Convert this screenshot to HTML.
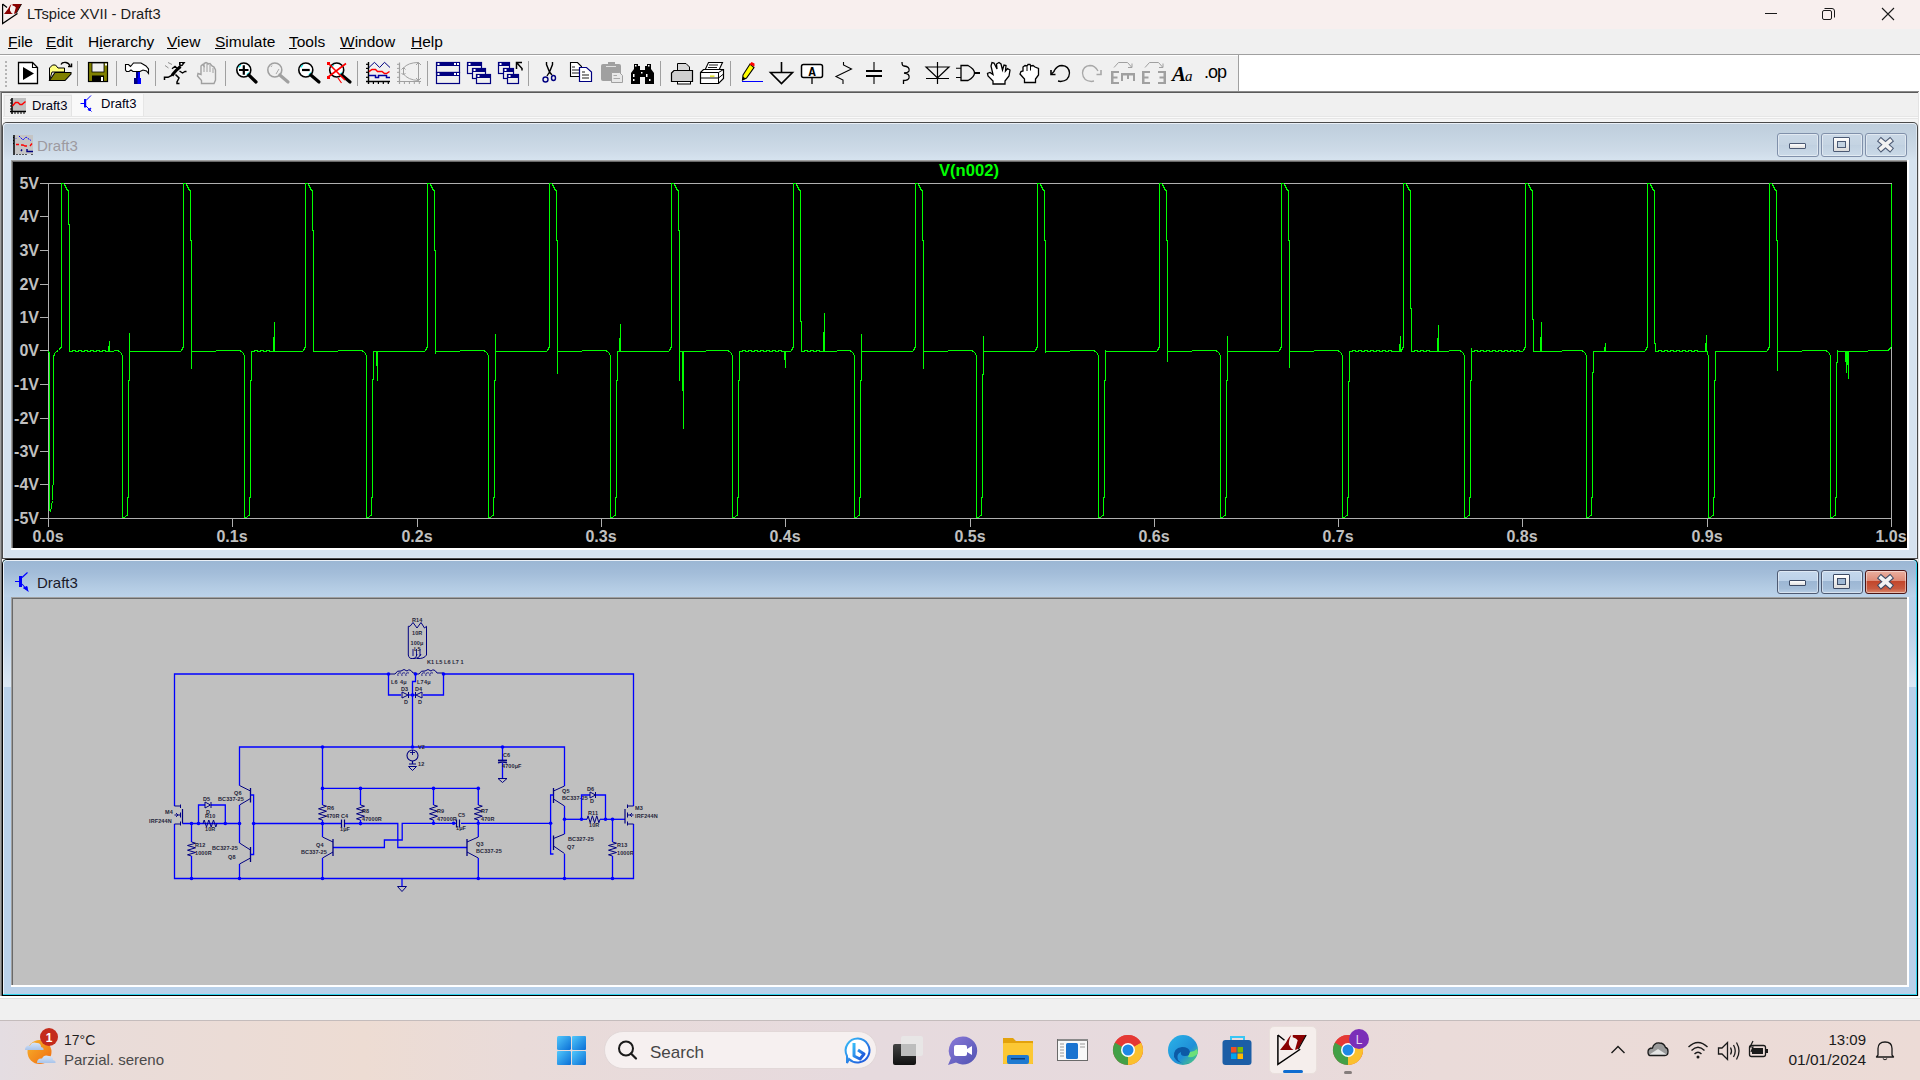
<!DOCTYPE html><html><head><meta charset="utf-8"><style>
*{box-sizing:border-box;}
html,body{margin:0;padding:0;}
body{width:1920px;height:1080px;position:relative;overflow:hidden;background:#f0f0f0;font-family:"Liberation Sans",sans-serif;}
.a{position:absolute;}
.t{position:absolute;white-space:nowrap;line-height:1;}
svg{position:absolute;overflow:visible;}
</style></head><body><div class="a" style="left:0px;top:0px;width:1920px;height:29px;background:#f8efee;"></div>
<div class="a" style="left:0px;top:29px;width:1920px;height:25px;background:#f0f0f0;"></div>
<div class="a" style="left:0px;top:54px;width:1920px;height:1px;background:#a0a0a0;"></div>
<div class="a" style="left:0px;top:55px;width:1920px;height:1px;background:#ffffff;"></div>
<div class="a" style="left:0px;top:56px;width:1238px;height:36px;background:#f0f0f0;"></div>
<div class="a" style="left:1238px;top:55px;width:1px;height:37px;background:#a0a0a0;"></div>
<div class="a" style="left:1239px;top:55px;width:681px;height:37px;background:#ffffff;"></div>
<div class="a" style="left:0px;top:91px;width:1919px;height:1px;background:#8a8a8a;"></div>
<div class="a" style="left:0px;top:92px;width:1919px;height:1px;background:#5a5a5a;"></div>
<div class="a" style="left:0px;top:92px;width:1px;height:904px;background:#a0a0a0;"></div>
<div class="a" style="left:1px;top:92px;width:1px;height:904px;background:#696969;"></div>
<div class="a" style="left:2px;top:93px;width:1px;height:903px;background:#ffffff;"></div>
<div class="a" style="left:1918px;top:92px;width:1px;height:904px;background:#e3e3e3;"></div>
<div class="a" style="left:1919px;top:92px;width:1px;height:904px;background:#ffffff;"></div>
<div class="a" style="left:3px;top:93px;width:1915px;height:25px;background:#f0f0f0;"></div>
<div class="a" style="left:3px;top:118px;width:1915px;height:4px;background:#f4f4f4;"></div>
<div class="a" style="left:0px;top:996px;width:1920px;height:24px;background:#f0f0f0;"></div>
<div class="a" style="left:0px;top:996px;width:1920px;height:2px;background:#ffffff;"></div>
<div class="a" style="left:0px;top:998px;width:1920px;height:1px;background:#e0e0e0;"></div>
<div class="a" style="left:4px;top:95px;width:68px;height:22px;background:#f0f0f0;border:1px solid #e3e3e3;"></div>
<div class="a" style="left:72px;top:94px;width:72px;height:24px;background:#f9f9f9;border-right:1px solid #e6e6e6;"></div>
<div class="a" style="left:3px;top:116px;width:1915px;height:1px;background:#e6e6e6;"></div>
<div class="a" style="left:3px;top:117px;width:1915px;height:1px;background:#fafafa;"></div>
<div class="a" style="left:3px;top:118px;width:1915px;height:1px;background:#e6e6e6;"></div>
<div class="t" style="left:32px;top:99px;font-size:13px;color:#000014;">Draft3</div>
<div class="t" style="left:101px;top:97px;font-size:13px;color:#000014;">Draft3</div>
<div class="a" style="left:2px;top:122px;width:1916px;height:437px;background:#4a4a4a;border-radius:5px 5px 0 0;"></div>
<div class="a" style="left:3px;top:123px;width:1914px;height:435px;background:#dde7f1;border-radius:4px 4px 0 0;"></div>
<div class="a" style="left:3px;top:123px;width:1913px;height:434px;background:#eaf0f7;border-radius:4px 4px 0 0;"></div>
<div class="a" style="left:4px;top:124px;width:1912px;height:433px;background:#d6e3ef;border-radius:3px 3px 0 0;"></div>
<div class="a" style="left:4px;top:124px;width:1912px;height:36px;background:linear-gradient(180deg,#bfcedc 0px,#c4d3e1 12px,#cddae7 26px,#d6e3ef 36px);border-radius:3px 3px 0 0;"></div>
<div class="a" style="left:11px;top:160px;width:1898px;height:390px;background:#ffffff;"></div>
<div class="a" style="left:11px;top:160px;width:1896px;height:388px;background:#a0a0a0;"></div>
<div class="a" style="left:12px;top:161px;width:1895px;height:387px;background:#696969;"></div>
<div class="a" style="left:2px;top:559px;width:1916px;height:437px;background:#000000;border-radius:5px 5px 0 0;"></div>
<div class="a" style="left:3px;top:560px;width:1914px;height:435px;background:#2fd3ee;border-radius:4px 4px 0 0;"></div>
<div class="a" style="left:3px;top:560px;width:1913px;height:434px;background:#eaf0f7;border-radius:4px 4px 0 0;"></div>
<div class="a" style="left:4px;top:561px;width:1912px;height:433px;background:#b9d1ea;border-radius:3px 3px 0 0;"></div>
<div class="a" style="left:4px;top:561px;width:1912px;height:36px;background:linear-gradient(180deg,#9bb7d4 0px,#a3bdd9 12px,#b3cbe3 26px,#bcd3ea 36px);border-radius:3px 3px 0 0;"></div>
<div class="a" style="left:4px;top:597px;width:7px;height:90px;background:linear-gradient(180deg,#b9d1ea 0%,#bdd3ea 38%,#dce8f4 100%);"></div>
<div class="a" style="left:1909px;top:597px;width:7px;height:90px;background:linear-gradient(180deg,#b9d1ea 0%,#bdd3ea 38%,#dce8f4 100%);"></div>
<div class="a" style="left:11px;top:597px;width:1898px;height:390px;background:#ffffff;"></div>
<div class="a" style="left:11px;top:597px;width:1896px;height:388px;background:#a0a0a0;"></div>
<div class="a" style="left:12px;top:598px;width:1895px;height:387px;background:#696969;"></div>
<div class="a" style="left:13px;top:162px;width:1894px;height:386px;background:#000000;"></div>
<div class="a" style="left:13px;top:599px;width:1894px;height:386px;background:#c0c0c0;"></div>
<svg class="a" style="left:0;top:0" width="1920" height="1080" shape-rendering="crispEdges"><path d="M48.5,183.5 H1891.5 V518.5 H48.5 Z" fill="none" stroke="#b0b0b0" stroke-width="1"/><path d="M40,183.5 H48" stroke="#b0b0b0" stroke-width="1"/><path d="M40,216.5 H48" stroke="#b0b0b0" stroke-width="1"/><path d="M40,250.5 H48" stroke="#b0b0b0" stroke-width="1"/><path d="M40,284.5 H48" stroke="#b0b0b0" stroke-width="1"/><path d="M40,317.5 H48" stroke="#b0b0b0" stroke-width="1"/><path d="M40,350.5 H48" stroke="#b0b0b0" stroke-width="1"/><path d="M40,384.5 H48" stroke="#b0b0b0" stroke-width="1"/><path d="M40,418.5 H48" stroke="#b0b0b0" stroke-width="1"/><path d="M40,451.5 H48" stroke="#b0b0b0" stroke-width="1"/><path d="M40,484.5 H48" stroke="#b0b0b0" stroke-width="1"/><path d="M40,518.5 H48" stroke="#b0b0b0" stroke-width="1"/><path d="M48.5,518 V527" stroke="#b0b0b0" stroke-width="1"/><path d="M232.5,518 V527" stroke="#b0b0b0" stroke-width="1"/><path d="M417.5,518 V527" stroke="#b0b0b0" stroke-width="1"/><path d="M601.5,518 V527" stroke="#b0b0b0" stroke-width="1"/><path d="M785.5,518 V527" stroke="#b0b0b0" stroke-width="1"/><path d="M970.5,518 V527" stroke="#b0b0b0" stroke-width="1"/><path d="M1154.5,518 V527" stroke="#b0b0b0" stroke-width="1"/><path d="M1338.5,518 V527" stroke="#b0b0b0" stroke-width="1"/><path d="M1522.5,518 V527" stroke="#b0b0b0" stroke-width="1"/><path d="M1707.5,518 V527" stroke="#b0b0b0" stroke-width="1"/><path d="M1891.5,518 V527" stroke="#b0b0b0" stroke-width="1"/><polyline points="48.5,351.5 49.5,353.5 49.5,510.5 50.5,511.5 51.5,506.5 52.5,500.5 53.5,470.5 53.5,357.5 54.5,353.5 56.5,351.5 58.5,350.5 59.5,349.5 60.5,347.5 60.5,348.5 61.5,346.5 61.5,183.5 63.5,183.5 64.5,184.5 65.5,186.5 66.5,188.5 67.5,190.5 68.5,190.5 68.5,224.5 69.5,224.5 69.5,351.5 69.5,351.5 70.5,351.5 72.5,351.5 72.5,350.5 75.5,350.5 75.5,351.5 78.5,351.5 78.5,350.5 81.5,350.5 81.5,351.5 84.5,351.5 84.5,350.5 87.5,350.5 87.5,351.5 90.5,351.5 90.5,350.5 93.5,350.5 93.5,351.5 96.5,351.5 96.5,350.5 99.5,350.5 99.5,351.5 102.5,351.5 102.5,350.5 105.5,350.5 105.5,351.5 108.5,351.5 109.5,341.5 109.5,351.5 110.5,351.5 117.5,350.5 119.5,351.5 121.5,353.5 122.5,356.5 122.5,517.5 124.5,517.5 125.5,516.5 126.5,515.5 127.5,515.5 127.5,497.5 128.5,497.5 128.5,380.5 129.5,380.5 129.5,332.5 129.5,351.5 130.5,351.5 180.5,351.5 181.5,350.5 182.5,348.5 183.5,346.5 183.5,183.5 185.5,183.5 186.5,184.5 187.5,186.5 188.5,188.5 189.5,190.5 190.5,190.5 190.5,240.5 191.5,240.5 191.5,368.5 191.5,351.5 192.5,351.5 239.5,350.5 241.5,351.5 243.5,353.5 244.5,356.5 244.5,517.5 246.5,517.5 247.5,516.5 248.5,515.5 249.5,515.5 249.5,497.5 250.5,497.5 250.5,380.5 251.5,380.5 251.5,351.5 251.5,351.5 252.5,351.5 254.5,351.5 254.5,350.5 257.5,350.5 257.5,351.5 260.5,351.5 260.5,350.5 263.5,350.5 263.5,351.5 266.5,351.5 266.5,350.5 269.5,350.5 269.5,351.5 273.5,351.5 274.5,322.5 274.5,351.5 275.5,351.5 302.5,351.5 303.5,350.5 304.5,348.5 305.5,346.5 305.5,183.5 307.5,183.5 308.5,184.5 309.5,186.5 310.5,188.5 311.5,190.5 312.5,190.5 312.5,230.5 313.5,230.5 313.5,351.5 313.5,351.5 314.5,351.5 361.5,350.5 363.5,351.5 365.5,353.5 366.5,356.5 366.5,517.5 368.5,517.5 369.5,516.5 370.5,515.5 371.5,515.5 371.5,497.5 372.5,497.5 372.5,379.5 373.5,379.5 373.5,351.5 373.5,351.5 374.5,351.5 376.5,351.5 377.5,380.5 377.5,351.5 378.5,351.5 424.5,351.5 425.5,350.5 426.5,348.5 427.5,346.5 427.5,183.5 429.5,183.5 430.5,184.5 431.5,186.5 432.5,188.5 433.5,190.5 434.5,190.5 434.5,250.5 435.5,250.5 435.5,353.5 435.5,351.5 436.5,351.5 483.5,350.5 485.5,351.5 487.5,353.5 488.5,356.5 488.5,517.5 490.5,517.5 491.5,516.5 492.5,515.5 493.5,515.5 493.5,497.5 494.5,497.5 494.5,380.5 495.5,380.5 495.5,333.5 495.5,351.5 496.5,351.5 546.5,351.5 547.5,350.5 548.5,348.5 549.5,346.5 549.5,183.5 551.5,183.5 552.5,184.5 553.5,186.5 554.5,188.5 555.5,190.5 556.5,190.5 556.5,240.5 557.5,240.5 557.5,373.5 557.5,351.5 558.5,351.5 605.5,350.5 607.5,351.5 609.5,353.5 610.5,356.5 610.5,517.5 612.5,517.5 613.5,516.5 614.5,515.5 615.5,515.5 615.5,497.5 616.5,497.5 616.5,380.5 617.5,380.5 617.5,351.5 617.5,351.5 618.5,351.5 619.5,351.5 620.5,324.5 620.5,351.5 621.5,351.5 668.5,351.5 669.5,350.5 670.5,348.5 671.5,346.5 671.5,183.5 673.5,183.5 674.5,184.5 675.5,186.5 676.5,188.5 677.5,190.5 678.5,190.5 678.5,230.5 679.5,230.5 679.5,380.5 679.5,351.5 680.5,351.5 682.5,351.5 683.5,428.5 683.5,351.5 684.5,351.5 727.5,350.5 729.5,351.5 731.5,353.5 732.5,356.5 732.5,517.5 734.5,517.5 735.5,516.5 736.5,515.5 737.5,515.5 737.5,497.5 738.5,497.5 738.5,380.5 739.5,380.5 739.5,351.5 739.5,351.5 740.5,351.5 742.5,351.5 742.5,350.5 745.5,350.5 745.5,351.5 748.5,351.5 748.5,350.5 751.5,350.5 751.5,351.5 754.5,351.5 754.5,350.5 757.5,350.5 757.5,351.5 760.5,351.5 760.5,350.5 763.5,350.5 763.5,351.5 766.5,351.5 766.5,350.5 769.5,350.5 769.5,351.5 772.5,351.5 772.5,350.5 775.5,350.5 775.5,351.5 778.5,351.5 778.5,350.5 781.5,350.5 781.5,351.5 784.5,351.5 785.5,367.5 785.5,351.5 786.5,351.5 790.5,351.5 791.5,350.5 792.5,348.5 793.5,346.5 793.5,183.5 795.5,183.5 796.5,184.5 797.5,186.5 798.5,188.5 799.5,190.5 800.5,190.5 800.5,321.5 801.5,321.5 801.5,351.5 801.5,351.5 802.5,351.5 804.5,351.5 804.5,350.5 807.5,350.5 807.5,351.5 810.5,351.5 810.5,350.5 813.5,350.5 813.5,351.5 816.5,351.5 816.5,350.5 819.5,350.5 819.5,351.5 823.5,351.5 824.5,313.5 824.5,351.5 825.5,351.5 849.5,350.5 851.5,351.5 853.5,353.5 854.5,356.5 854.5,517.5 856.5,517.5 857.5,516.5 858.5,515.5 859.5,515.5 859.5,497.5 860.5,497.5 860.5,380.5 861.5,380.5 861.5,333.5 861.5,351.5 862.5,351.5 912.5,351.5 913.5,350.5 914.5,348.5 915.5,346.5 915.5,183.5 917.5,183.5 918.5,184.5 919.5,186.5 920.5,188.5 921.5,190.5 922.5,190.5 922.5,240.5 923.5,240.5 923.5,368.5 923.5,351.5 924.5,351.5 971.5,350.5 973.5,351.5 975.5,353.5 976.5,356.5 976.5,517.5 978.5,517.5 979.5,516.5 980.5,515.5 981.5,515.5 981.5,497.5 982.5,497.5 982.5,374.5 983.5,374.5 983.5,335.5 983.5,351.5 984.5,351.5 1034.5,351.5 1035.5,350.5 1036.5,348.5 1037.5,346.5 1037.5,183.5 1039.5,183.5 1040.5,184.5 1041.5,186.5 1042.5,188.5 1043.5,190.5 1044.5,190.5 1044.5,240.5 1045.5,240.5 1045.5,352.5 1045.5,351.5 1046.5,351.5 1093.5,350.5 1095.5,351.5 1097.5,353.5 1098.5,356.5 1098.5,517.5 1100.5,517.5 1101.5,516.5 1102.5,515.5 1103.5,515.5 1103.5,497.5 1104.5,497.5 1104.5,380.5 1105.5,380.5 1105.5,349.5 1105.5,351.5 1106.5,351.5 1156.5,351.5 1157.5,350.5 1158.5,348.5 1159.5,346.5 1159.5,183.5 1161.5,183.5 1162.5,184.5 1163.5,186.5 1164.5,188.5 1165.5,190.5 1166.5,190.5 1166.5,240.5 1167.5,240.5 1167.5,361.5 1167.5,351.5 1168.5,351.5 1215.5,350.5 1217.5,351.5 1219.5,353.5 1220.5,356.5 1220.5,517.5 1222.5,517.5 1223.5,516.5 1224.5,515.5 1225.5,515.5 1225.5,497.5 1226.5,497.5 1226.5,380.5 1227.5,380.5 1227.5,335.5 1227.5,351.5 1228.5,351.5 1278.5,351.5 1279.5,350.5 1280.5,348.5 1281.5,346.5 1281.5,183.5 1283.5,183.5 1284.5,184.5 1285.5,186.5 1286.5,188.5 1287.5,190.5 1288.5,190.5 1288.5,240.5 1289.5,240.5 1289.5,367.5 1289.5,351.5 1290.5,351.5 1337.5,350.5 1339.5,351.5 1341.5,353.5 1342.5,356.5 1342.5,517.5 1344.5,517.5 1345.5,516.5 1346.5,515.5 1347.5,515.5 1347.5,497.5 1348.5,497.5 1348.5,381.5 1349.5,381.5 1349.5,351.5 1349.5,351.5 1350.5,351.5 1352.5,351.5 1352.5,350.5 1355.5,350.5 1355.5,351.5 1358.5,351.5 1358.5,350.5 1361.5,350.5 1361.5,351.5 1364.5,351.5 1364.5,350.5 1367.5,350.5 1367.5,351.5 1370.5,351.5 1370.5,350.5 1373.5,350.5 1373.5,351.5 1376.5,351.5 1376.5,350.5 1379.5,350.5 1379.5,351.5 1382.5,351.5 1382.5,350.5 1385.5,350.5 1385.5,351.5 1388.5,351.5 1388.5,350.5 1391.5,350.5 1391.5,351.5 1394.5,351.5 1394.5,351.5 1399.5,351.5 1400.5,336.5 1400.5,351.5 1401.5,351.5 1401.5,350.5 1402.5,348.5 1403.5,346.5 1403.5,183.5 1405.5,183.5 1406.5,184.5 1407.5,186.5 1408.5,188.5 1409.5,190.5 1410.5,190.5 1410.5,308.5 1411.5,308.5 1411.5,351.5 1411.5,351.5 1412.5,351.5 1414.5,351.5 1414.5,350.5 1417.5,350.5 1417.5,351.5 1420.5,351.5 1420.5,350.5 1423.5,350.5 1423.5,351.5 1426.5,351.5 1426.5,350.5 1429.5,350.5 1429.5,351.5 1432.5,351.5 1432.5,351.5 1437.5,351.5 1438.5,325.5 1438.5,351.5 1439.5,351.5 1459.5,350.5 1461.5,351.5 1463.5,353.5 1464.5,356.5 1464.5,517.5 1466.5,517.5 1467.5,516.5 1468.5,515.5 1469.5,515.5 1469.5,497.5 1470.5,497.5 1470.5,380.5 1471.5,380.5 1471.5,347.5 1471.5,351.5 1472.5,351.5 1474.5,351.5 1474.5,350.5 1477.5,350.5 1477.5,351.5 1480.5,351.5 1480.5,350.5 1483.5,350.5 1483.5,351.5 1486.5,351.5 1486.5,350.5 1489.5,350.5 1489.5,351.5 1492.5,351.5 1492.5,350.5 1495.5,350.5 1495.5,351.5 1498.5,351.5 1498.5,350.5 1501.5,350.5 1501.5,351.5 1504.5,351.5 1504.5,350.5 1507.5,350.5 1507.5,351.5 1510.5,351.5 1510.5,350.5 1513.5,350.5 1513.5,351.5 1516.5,351.5 1516.5,350.5 1519.5,350.5 1519.5,351.5 1522.5,351.5 1523.5,350.5 1524.5,348.5 1525.5,346.5 1525.5,183.5 1527.5,183.5 1528.5,184.5 1529.5,186.5 1530.5,188.5 1531.5,190.5 1532.5,190.5 1532.5,319.5 1533.5,319.5 1533.5,351.5 1533.5,351.5 1534.5,351.5 1540.5,351.5 1541.5,322.5 1541.5,351.5 1542.5,351.5 1581.5,350.5 1583.5,351.5 1585.5,353.5 1586.5,356.5 1586.5,517.5 1588.5,517.5 1589.5,516.5 1590.5,515.5 1591.5,515.5 1591.5,497.5 1592.5,497.5 1592.5,372.5 1593.5,372.5 1593.5,351.5 1593.5,351.5 1594.5,351.5 1604.5,351.5 1605.5,343.5 1605.5,351.5 1606.5,351.5 1644.5,351.5 1645.5,350.5 1646.5,348.5 1647.5,346.5 1647.5,183.5 1649.5,183.5 1650.5,184.5 1651.5,186.5 1652.5,188.5 1653.5,190.5 1654.5,190.5 1654.5,343.5 1655.5,343.5 1655.5,351.5 1655.5,351.5 1656.5,351.5 1658.5,351.5 1658.5,350.5 1661.5,350.5 1661.5,351.5 1664.5,351.5 1664.5,350.5 1667.5,350.5 1667.5,351.5 1670.5,351.5 1670.5,350.5 1673.5,350.5 1673.5,351.5 1676.5,351.5 1676.5,350.5 1679.5,350.5 1679.5,351.5 1682.5,351.5 1682.5,350.5 1685.5,350.5 1685.5,351.5 1688.5,351.5 1688.5,350.5 1691.5,350.5 1691.5,351.5 1694.5,351.5 1694.5,350.5 1697.5,350.5 1697.5,351.5 1700.5,351.5 1700.5,351.5 1705.5,351.5 1706.5,335.5 1706.5,351.5 1707.5,351.5 1707.5,353.5 1708.5,356.5 1708.5,517.5 1710.5,517.5 1711.5,516.5 1712.5,515.5 1713.5,515.5 1713.5,497.5 1714.5,497.5 1714.5,380.5 1715.5,380.5 1715.5,351.5 1715.5,351.5 1716.5,351.5 1766.5,351.5 1767.5,350.5 1768.5,348.5 1769.5,346.5 1769.5,183.5 1771.5,183.5 1772.5,184.5 1773.5,186.5 1774.5,188.5 1775.5,190.5 1776.5,190.5 1776.5,240.5 1777.5,240.5 1777.5,370.5 1777.5,351.5 1778.5,351.5 1825.5,350.5 1827.5,351.5 1829.5,353.5 1830.5,356.5 1830.5,517.5 1832.5,517.5 1833.5,516.5 1834.5,515.5 1835.5,515.5 1835.5,497.5 1836.5,497.5 1836.5,362.5 1837.5,362.5 1837.5,349.5 1837.5,351.5 1838.5,351.5 1845.5,351.5 1846.5,372.5 1846.5,351.5 1847.5,351.5 1847.5,351.5 1848.5,378.5 1848.5,351.5 1849.5,351.5 1887.5,350.5 1889.5,349.5 1890.5,347.5 1891.5,346.5 1891.5,183.5" fill="none" stroke="#00ff00" stroke-width="1" stroke-linejoin="miter"/></svg>
<div class="t" style="left:0px;width:39px;text-align:right;top:176px;font-size:16px;font-weight:bold;color:#c0c0c0;">5V</div>
<div class="t" style="left:0px;width:39px;text-align:right;top:209px;font-size:16px;font-weight:bold;color:#c0c0c0;">4V</div>
<div class="t" style="left:0px;width:39px;text-align:right;top:243px;font-size:16px;font-weight:bold;color:#c0c0c0;">3V</div>
<div class="t" style="left:0px;width:39px;text-align:right;top:277px;font-size:16px;font-weight:bold;color:#c0c0c0;">2V</div>
<div class="t" style="left:0px;width:39px;text-align:right;top:310px;font-size:16px;font-weight:bold;color:#c0c0c0;">1V</div>
<div class="t" style="left:0px;width:39px;text-align:right;top:343px;font-size:16px;font-weight:bold;color:#c0c0c0;">0V</div>
<div class="t" style="left:0px;width:39px;text-align:right;top:377px;font-size:16px;font-weight:bold;color:#c0c0c0;">-1V</div>
<div class="t" style="left:0px;width:39px;text-align:right;top:411px;font-size:16px;font-weight:bold;color:#c0c0c0;">-2V</div>
<div class="t" style="left:0px;width:39px;text-align:right;top:444px;font-size:16px;font-weight:bold;color:#c0c0c0;">-3V</div>
<div class="t" style="left:0px;width:39px;text-align:right;top:477px;font-size:16px;font-weight:bold;color:#c0c0c0;">-4V</div>
<div class="t" style="left:0px;width:39px;text-align:right;top:511px;font-size:16px;font-weight:bold;color:#c0c0c0;">-5V</div>
<div class="t" style="left:8px;width:80px;text-align:center;top:529px;font-size:16px;font-weight:bold;color:#c0c0c0;">0.0s</div>
<div class="t" style="left:192px;width:80px;text-align:center;top:529px;font-size:16px;font-weight:bold;color:#c0c0c0;">0.1s</div>
<div class="t" style="left:377px;width:80px;text-align:center;top:529px;font-size:16px;font-weight:bold;color:#c0c0c0;">0.2s</div>
<div class="t" style="left:561px;width:80px;text-align:center;top:529px;font-size:16px;font-weight:bold;color:#c0c0c0;">0.3s</div>
<div class="t" style="left:745px;width:80px;text-align:center;top:529px;font-size:16px;font-weight:bold;color:#c0c0c0;">0.4s</div>
<div class="t" style="left:930px;width:80px;text-align:center;top:529px;font-size:16px;font-weight:bold;color:#c0c0c0;">0.5s</div>
<div class="t" style="left:1114px;width:80px;text-align:center;top:529px;font-size:16px;font-weight:bold;color:#c0c0c0;">0.6s</div>
<div class="t" style="left:1298px;width:80px;text-align:center;top:529px;font-size:16px;font-weight:bold;color:#c0c0c0;">0.7s</div>
<div class="t" style="left:1482px;width:80px;text-align:center;top:529px;font-size:16px;font-weight:bold;color:#c0c0c0;">0.8s</div>
<div class="t" style="left:1667px;width:80px;text-align:center;top:529px;font-size:16px;font-weight:bold;color:#c0c0c0;">0.9s</div>
<div class="t" style="left:1851px;width:80px;text-align:center;top:529px;font-size:16px;font-weight:bold;color:#c0c0c0;">1.0s</div>
<div class="t" style="left:939px;top:163px;font-size:16.6px;font-weight:bold;color:#00ff00;">V(n002)</div>
<svg class="a" style="left:0;top:0" width="30" height="28" viewBox="0 0 30 28"><path d="M2.6,4 V23.5 L17.5,13.5 M2.6,4 L7,7.5" fill="none" stroke="#000" stroke-width="1.2"/><path d="M4,14 L8,9 Q10,5 11.5,4 Q9.5,8 10,10.5 Q11,13 13,14 Z" fill="#8a0000"/><path d="M12.5,4 H21.5 L16.5,12.5 Q15.5,14 14,13.8 L15.8,7.5 Q15,6 12.5,5.5 Z" fill="#8a0000"/><path d="M21.5,4 L16.2,13.5" fill="none" stroke="#000" stroke-width="0.9"/></svg>
<div class="t" style="left:27px;top:7px;font-size:14.7px;color:#1c1c1c;">LTspice XVII - Draft3</div>
<svg class="a" style="left:1760px;top:0" width="160" height="29"><path d="M5,13.5 H17" stroke="#1a1a1a" stroke-width="1"/><rect x="62.5" y="10.5" width="9" height="9" rx="1.5" fill="none" stroke="#1a1a1a" stroke-width="1"/><path d="M64.5,8.5 H72 Q74.5,8.5 74.5,11 V17.5" fill="none" stroke="#1a1a1a" stroke-width="1"/><path d="M122,8 L134,20 M134,8 L122,20" stroke="#1a1a1a" stroke-width="1.1"/></svg>
<div class="t" style="left:8px;top:34px;font-size:15.5px;color:#000;text-decoration-thickness:1px;text-underline-offset:1px;"><u>F</u>ile</div>
<div class="t" style="left:46px;top:34px;font-size:15.5px;color:#000;text-decoration-thickness:1px;text-underline-offset:1px;"><u>E</u>dit</div>
<div class="t" style="left:88px;top:34px;font-size:15.5px;color:#000;text-decoration-thickness:1px;text-underline-offset:1px;">H<u>i</u>erarchy</div>
<div class="t" style="left:167px;top:34px;font-size:15.5px;color:#000;text-decoration-thickness:1px;text-underline-offset:1px;"><u>V</u>iew</div>
<div class="t" style="left:215px;top:34px;font-size:15.5px;color:#000;text-decoration-thickness:1px;text-underline-offset:1px;"><u>S</u>imulate</div>
<div class="t" style="left:289px;top:34px;font-size:15.5px;color:#000;text-decoration-thickness:1px;text-underline-offset:1px;"><u>T</u>ools</div>
<div class="t" style="left:340px;top:34px;font-size:15.5px;color:#000;text-decoration-thickness:1px;text-underline-offset:1px;"><u>W</u>indow</div>
<div class="t" style="left:411px;top:34px;font-size:15.5px;color:#000;text-decoration-thickness:1px;text-underline-offset:1px;"><u>H</u>elp</div>
<div class="a" style="left:1777px;top:133px;width:42px;height:24px;border:1px solid #8090aa;border-radius:3px;background:linear-gradient(180deg,#cad8e6 0%,#c4d3e2 50%,#c0d0e0 51%,#cbdae8 100%);box-shadow:inset 0 0 0 1px rgba(255,255,255,0.45);"></div>
<div class="a" style="left:1821px;top:133px;width:42px;height:24px;border:1px solid #8090aa;border-radius:3px;background:linear-gradient(180deg,#cad8e6 0%,#c4d3e2 50%,#c0d0e0 51%,#cbdae8 100%);box-shadow:inset 0 0 0 1px rgba(255,255,255,0.45);"></div>
<div class="a" style="left:1865px;top:133px;width:42px;height:24px;border:1px solid #8090aa;border-radius:3px;background:linear-gradient(180deg,#cad8e6 0%,#c4d3e2 50%,#c0d0e0 51%,#cbdae8 100%);box-shadow:inset 0 0 0 1px rgba(255,255,255,0.45);"></div>
<div class="a" style="left:1789px;top:143px;width:17px;height:6px;background:linear-gradient(#ffffff,#e0e0e0);border:1px solid #4c5a74;border-radius:1px;"></div>
<div class="a" style="left:1833px;top:137px;width:17px;height:15px;background:linear-gradient(#ffffff,#dcdcdc);border:1px solid #4c5a74;border-radius:1px;"></div>
<div class="a" style="left:1837px;top:141px;width:9px;height:7px;background:#c4d3e1;border:1px solid #4c5a74;"></div>
<svg class="a" style="left:1876px;top:136px" width="20" height="18" viewBox="0 0 20 18"><path d="M2.9,3.0 L16.1,14.4 M16.1,3.0 L2.9,14.4" stroke="#4c5a74" stroke-width="6" stroke-linecap="butt"/><path d="M3.6,3.6 L15.4,13.8 M15.4,3.6 L3.6,13.8" stroke="#f2f2f2" stroke-width="3.8" stroke-linecap="butt"/></svg>
<div class="a" style="left:1777px;top:570px;width:42px;height:24px;border:1px solid #4e5a72;border-radius:3px;background:linear-gradient(180deg,#c5d8ec 0%,#bcd1e8 45%,#9cb6d3 46%,#a4bdd8 80%,#b9cfe6 100%);box-shadow:inset 0 0 0 1px rgba(255,255,255,0.45);"></div>
<div class="a" style="left:1821px;top:570px;width:42px;height:24px;border:1px solid #4e5a72;border-radius:3px;background:linear-gradient(180deg,#c5d8ec 0%,#bcd1e8 45%,#9cb6d3 46%,#a4bdd8 80%,#b9cfe6 100%);box-shadow:inset 0 0 0 1px rgba(255,255,255,0.45);"></div>
<div class="a" style="left:1865px;top:570px;width:42px;height:24px;border:1px solid #4b1414;border-radius:3px;background:linear-gradient(180deg,#eab0a0 0%,#de8a76 45%,#c2452a 46%,#c85a40 80%,#d98a70 100%);box-shadow:inset 0 0 0 1px rgba(255,255,255,0.45);"></div>
<div class="a" style="left:1789px;top:580px;width:17px;height:6px;background:linear-gradient(#ffffff,#e0e0e0);border:1px solid #3c4a64;border-radius:1px;"></div>
<div class="a" style="left:1833px;top:574px;width:17px;height:15px;background:linear-gradient(#ffffff,#dcdcdc);border:1px solid #3c4a64;border-radius:1px;"></div>
<div class="a" style="left:1837px;top:578px;width:9px;height:7px;background:#9fb8d4;border:1px solid #3c4a64;"></div>
<svg class="a" style="left:1876px;top:573px" width="20" height="18" viewBox="0 0 20 18"><path d="M2.9,3.0 L16.1,14.4 M16.1,3.0 L2.9,14.4" stroke="#3c4a64" stroke-width="6" stroke-linecap="butt"/><path d="M3.6,3.6 L15.4,13.8 M15.4,3.6 L3.6,13.8" stroke="#f2f2f2" stroke-width="3.8" stroke-linecap="butt"/></svg>
<div class="t" style="left:37px;top:138px;font-size:15px;color:#9d9aa0;">Draft3</div>
<div class="t" style="left:37px;top:575px;font-size:15px;color:#1a1a2a;">Draft3</div>
<svg class="a" style="left:0;top:0" width="1240" height="92"><rect x="5" y="61" width="2" height="2" fill="#b4b4b4"/><rect x="5" y="65" width="2" height="2" fill="#b4b4b4"/><rect x="5" y="69" width="2" height="2" fill="#b4b4b4"/><rect x="5" y="73" width="2" height="2" fill="#b4b4b4"/><rect x="5" y="77" width="2" height="2" fill="#b4b4b4"/><rect x="5" y="81" width="2" height="2" fill="#b4b4b4"/><rect x="5" y="85" width="2" height="2" fill="#b4b4b4"/><rect x="77" y="61" width="1" height="25" fill="#a0a0a0"/><rect x="116" y="61" width="1" height="25" fill="#a0a0a0"/><rect x="155" y="61" width="1" height="25" fill="#a0a0a0"/><rect x="225" y="61" width="1" height="25" fill="#a0a0a0"/><rect x="357" y="61" width="1" height="25" fill="#a0a0a0"/><rect x="427" y="61" width="1" height="25" fill="#a0a0a0"/><rect x="528" y="61" width="1" height="25" fill="#a0a0a0"/><rect x="660" y="61" width="1" height="25" fill="#a0a0a0"/><rect x="730" y="61" width="1" height="25" fill="#a0a0a0"/><path d="M18.5,62.5 H32.5 L37.5,67.5 V83.5 H18.5 Z" fill="#fff" stroke="#000" stroke-width="1.3"/><path d="M32.5,62.5 V67.5 H37.5" fill="none" stroke="#000" stroke-width="1.1"/><path d="M23,67 L34,73.5 L23,80 Z" fill="#000"/><path d="M49.5,80.5 V68 L52.5,65 H55.5 L58,68 H64.5 V72 H52 Z" fill="#ffff80" stroke="#000" stroke-width="1"/><path d="M49.5,80.5 L55,72.5 H71 V74 L65,80.5 Z" fill="#808000" stroke="#000" stroke-width="1.1"/><path d="M61,64.5 Q62,62 66,62.5 Q69,63 70,66" fill="none" stroke="#000" stroke-width="1.3"/><path d="M68,66.5 H71.5 V63.5" fill="none" stroke="#000" stroke-width="1.5"/><rect x="88.5" y="62.5" width="19" height="19" fill="#808000" stroke="#000" stroke-width="1.2"/><rect x="92" y="63" width="12" height="9" fill="#f0f0f0" stroke="#000" stroke-width="0.8"/><rect x="105" y="63.5" width="2" height="2" fill="#fff"/><rect x="92" y="75.5" width="12" height="6" fill="#000"/><rect x="101" y="77" width="2" height="4" fill="#fff"/><path d="M125.5,64.5 H128.5 L130.5,66.5 L133.5,63 H141 L146,66 L148.5,69 V73.5 L146.5,71 L143,70 L140,71.5 H133 L131,70 L129,71.5 H126.5 L125.5,70 Z" fill="#fff" stroke="#000" stroke-width="1.1"/><rect x="136" y="72" width="4" height="6" fill="#0000ff"/><rect x="136" y="72" width="2" height="6" fill="#000080"/><rect x="134" y="78" width="7" height="6" fill="#0000ff"/><rect x="134" y="78" width="3.5" height="6" fill="#000080"/><path d="M179,62 H185.5 L183,65.2 L180.5,66.8 L179,65 Z" fill="#000"/><rect x="180.6" y="63" width="1.6" height="1.6" fill="#fff"/><path d="M180.5,66.5 L176.5,70 L173.5,73.5 L172,75.5" fill="none" stroke="#000" stroke-width="3"/><path d="M172.5,75 L168,77.3 H164.5 V80" fill="none" stroke="#000" stroke-width="1.5"/><path d="M175.5,74.5 L179,78 L177,82 V83.5 H179.5" fill="none" stroke="#000" stroke-width="1.5"/><path d="M177.5,68.5 L175,66.3 L172,68.8 M179.5,71 L182.5,73 L185,71.5 H186.5" fill="none" stroke="#000" stroke-width="1.4"/><path d="M165,65.5 L168.5,68 M168,62.5 L172,64.5" stroke="#909090" stroke-width="1"/><path d="M201.5,83.5 V80.5 L197.5,76 L198,73.5 L201,74.5 V66 L202.5,64.5 L204,66 V63.5 L206,62.5 L208,63.5 V64 L210,63.5 L212,66 L214,67 L215.5,70 V80 L214,83.5 Z" fill="#f0f0f0" stroke="#a0a0a0" stroke-width="1.4"/><path d="M204,66 V72 M207,64 V72 M210,65 V72 M213,68 V73" stroke="#a0a0a0" stroke-width="1"/><circle cx="243.8" cy="70" r="7" fill="#fff" stroke="#000000" stroke-width="1.6"/><path d="M238.8,67.5 L240.8,65" stroke="#00ffff" stroke-width="1.2"/><path d="M248.8,72.5 L246.8,75" stroke="#00ffff" stroke-width="1.2"/><path d="M248.8,75 L256,82" stroke="#000000" stroke-width="3.2" stroke-linecap="round"/><path d="M239,70 H248.5 M243.8,65.3 V74.7" stroke="#000" stroke-width="2.2"/><circle cx="274.8" cy="70" r="7" fill="#f0f0f0" stroke="#a0a0a0" stroke-width="1.6"/><path d="M279.8,75 L288,82" stroke="#a0a0a0" stroke-width="3.2" stroke-linecap="round"/><path d="M271,67 L272,65.5 M276,74 L279,69" stroke="#a0a0a0" stroke-width="0.9"/><circle cx="305.8" cy="70" r="7" fill="#fff" stroke="#000000" stroke-width="1.6"/><path d="M300.8,67.5 L302.8,65" stroke="#00ffff" stroke-width="1.2"/><path d="M310.8,72.5 L308.8,75" stroke="#00ffff" stroke-width="1.2"/><path d="M310.8,75 L319,82" stroke="#000000" stroke-width="3.2" stroke-linecap="round"/><path d="M302,70 H309.7" stroke="#000" stroke-width="2.2"/><circle cx="336.7" cy="70" r="7" fill="#fff" stroke="#000000" stroke-width="1.6"/><path d="M331.7,67.5 L333.7,65" stroke="#00ffff" stroke-width="1.2"/><path d="M341.7,72.5 L339.7,75" stroke="#00ffff" stroke-width="1.2"/><path d="M341.7,75 L350,82" stroke="#000000" stroke-width="3.2" stroke-linecap="round"/><path d="M327.5,62.5 L345,80 M327.5,77.5 L346,63.5" stroke="#ff0000" stroke-width="1.6"/><rect x="327" y="62" width="3" height="3" fill="#f00"/><rect x="327" y="76" width="3" height="3" fill="#f00"/><path d="M338,78 L341.5,83" stroke="#ff0000" stroke-width="1.2"/><path d="M368.5,62 V84 M366,81.5 H390" stroke="#000" stroke-width="1.4"/><path d="M366,64.3 H368.5" stroke="#000" stroke-width="1.2"/><path d="M366,68.4 H368.5" stroke="#000" stroke-width="1.2"/><path d="M366,72.3 H368.5" stroke="#000" stroke-width="1.2"/><path d="M366,77.3 H368.5" stroke="#000" stroke-width="1.2"/><path d="M373.4,81.5 V84" stroke="#000" stroke-width="1.2"/><path d="M378.4,81.5 V84" stroke="#000" stroke-width="1.2"/><path d="M383.3,81.5 V84" stroke="#000" stroke-width="1.2"/><path d="M388.3,81.5 V84" stroke="#000" stroke-width="1.2"/><polyline points="369,67.5 374.5,62.3 379.6,67.5 384.5,62.3 390,67.5" fill="none" stroke="#000080" stroke-width="1"/><polyline points="369,71.7 372,69.5 375.5,69.5 377.5,71.5 382,71.5 384.5,73.5 386.5,73.5 389.5,71.5" fill="none" stroke="#ff0000" stroke-width="1.5"/><polyline points="369,75.5 375.5,75.5 375.5,77.5 378.5,77.5 378.5,75.5 386.5,75.5 386.5,77.5 390,77.5" fill="none" stroke="#0000a0" stroke-width="1.5"/><path d="M399.5,62.5 V84 M397,81.5 H421" stroke="#a0a0a0" stroke-width="1.2"/><path d="M397,64.3 H399.5" stroke="#a0a0a0" stroke-width="1"/><path d="M397,68.4 H399.5" stroke="#a0a0a0" stroke-width="1"/><path d="M397,72.3 H399.5" stroke="#a0a0a0" stroke-width="1"/><path d="M397,77.3 H399.5" stroke="#a0a0a0" stroke-width="1"/><path d="M404.4,81.5 V84" stroke="#a0a0a0" stroke-width="1"/><path d="M409.4,81.5 V84" stroke="#a0a0a0" stroke-width="1"/><path d="M414.3,81.5 V84" stroke="#a0a0a0" stroke-width="1"/><path d="M419.3,81.5 V84" stroke="#a0a0a0" stroke-width="1"/><path d="M418.5,62.5 Q408,62.5 403.5,68 V74 Q408,80 418.5,80.5 M418.5,62.5 V80.5 M416,65 L418.5,62.5 L421,65 M416,78 L418.5,80.5 L421,78 M401.5,69.5 L403.5,67.5 L405.5,69.5 M401.5,73 L403.5,75 L405.5,73" fill="none" stroke="#a0a0a0" stroke-width="1"/><rect x="436.5" y="62.5" width="23" height="10" fill="#f0f0f0" stroke="#000080" stroke-width="1.2"/><rect x="436" y="62" width="24" height="4" fill="#000080"/><rect x="437.5" y="63" width="2" height="2" fill="#fff"/><rect x="454" y="63" width="2" height="2" fill="#fff"/><rect x="457" y="63" width="2" height="2" fill="#fff"/><rect x="436.5" y="72.5" width="23" height="11" fill="#f0f0f0" stroke="#000080" stroke-width="1.2"/><rect x="436" y="72" width="24" height="4" fill="#000080"/><rect x="437.5" y="73" width="2" height="2" fill="#fff"/><rect x="454" y="73" width="2" height="2" fill="#fff"/><rect x="457" y="73" width="2" height="2" fill="#fff"/><rect x="467.5" y="62.5" width="14" height="11" fill="#f0f0f0" stroke="#000080" stroke-width="1.2"/><rect x="467" y="62" width="15" height="4" fill="#000080"/><rect x="468.5" y="63" width="2" height="2" fill="#fff"/><rect x="472.5" y="68.5" width="13" height="10" fill="#f0f0f0" stroke="#000080" stroke-width="1.2"/><rect x="472" y="68" width="14" height="4" fill="#000080"/><rect x="473.5" y="69" width="2" height="2" fill="#fff"/><rect x="476.5" y="74.5" width="14" height="9" fill="#f0f0f0" stroke="#000080" stroke-width="1.2"/><rect x="476" y="74" width="15" height="4" fill="#000080"/><rect x="477.5" y="75" width="2" height="2" fill="#fff"/><rect x="498.5" y="62.5" width="11" height="11" fill="#f0f0f0" stroke="#000080" stroke-width="1.2"/><rect x="498" y="62" width="12" height="4" fill="#000080"/><rect x="499.5" y="63" width="2" height="2" fill="#fff"/><rect x="503.5" y="68.5" width="10" height="10" fill="#f0f0f0" stroke="#000080" stroke-width="1.2"/><rect x="503" y="68" width="11" height="4" fill="#000080"/><rect x="504.5" y="69" width="2" height="2" fill="#fff"/><rect x="507.5" y="74.5" width="11" height="9" fill="#f0f0f0" stroke="#000080" stroke-width="1.2"/><rect x="507" y="74" width="12" height="4" fill="#000080"/><rect x="508.5" y="75" width="2" height="2" fill="#fff"/><path d="M516.5,69 V62.5 H522 M517,63 L522,68.5 V70.5" fill="none" stroke="#000" stroke-width="1.5"/><path d="M546.5,62 V64.5 L549.5,72 L552.5,64.5 V62 M549.5,72 L547,76 M549.5,72 L552,75" fill="none" stroke="#000" stroke-width="1.4"/><ellipse cx="545.5" cy="79.5" rx="2.5" ry="2.5" fill="none" stroke="#000080" stroke-width="1.4"/><ellipse cx="553.5" cy="78" rx="2" ry="2.5" fill="none" stroke="#000080" stroke-width="1.4"/><path d="M570.5,62.5 H577.5 L581.5,66.5 V76.5 H570.5 Z" fill="#fff" stroke="#000" stroke-width="1.1"/><path d="M572,67 H575 M572,70 H579 M572,73 H579" stroke="#000" stroke-width="0.9"/><path d="M579.5,67.5 H586.5 L591.5,72 V81.5 H579.5 Z" fill="#fff" stroke="#000080" stroke-width="1.2"/><path d="M582,72 H585 M582,75 H589 M582,78 H589" stroke="#000" stroke-width="0.9"/><rect x="601" y="64" width="20" height="17" rx="2" fill="#a0a0a0"/><rect x="608" y="62" width="7" height="3" fill="#a0a0a0"/><path d="M606,66.5 H616" stroke="#e0e0e0" stroke-width="1"/><path d="M611.5,72.5 H619.5 L622.5,75.5 V82.5 H611.5 Z" fill="#e8e8e8" stroke="#a0a0a0" stroke-width="1"/><path d="M613.5,75.5 H617 M613.5,78.5 H620" stroke="#a0a0a0" stroke-width="0.9"/><path d="M634,64 H638 V66 H640 V70 H645 V66 H647 V64 H651 V69 L654,73 V84 H645 V77 H640 V84 H631 V73 L634,69 Z" fill="#000"/><rect x="635" y="65" width="1.5" height="1.5" fill="#fff"/><rect x="648" y="65" width="1.5" height="1.5" fill="#fff"/><rect x="633" y="74" width="1.5" height="3" fill="#fff"/><rect x="646" y="74" width="1.5" height="3" fill="#fff"/><rect x="633" y="79" width="1.5" height="2" fill="#fff"/><rect x="649" y="79" width="1.5" height="2" fill="#fff"/><rect x="641" y="72" width="1.5" height="1.5" fill="#fff"/><path d="M677.5,63.5 H686 L689.5,67 V70.5 H677.5 Z" fill="#d8d8d8" stroke="#000" stroke-width="1"/><path d="M674,70.5 H692.5 V81.5 H671.5 V73 Z" fill="#d0d0d0" stroke="#000" stroke-width="1.2"/><rect x="677.5" y="81.5" width="13" height="2.5" fill="#fff" stroke="#000" stroke-width="1"/><path d="M708.5,62.5 H722.5 L719,70 H705 Z" fill="#fff" stroke="#000" stroke-width="1.1"/><path d="M709,65 H718 M708,67.5 H717" stroke="#000" stroke-width="0.9"/><path d="M700.5,72.5 L703.5,69.5 H723.5 V78.5 L718.5,83.5 H700.5 Z" fill="#fff" stroke="#000" stroke-width="1.2"/><path d="M700.5,72.5 H718.5 L723.5,69.5 M718.5,72.5 V83.5 M700.5,78 H718.5 L723.5,74" fill="none" stroke="#000" stroke-width="1"/><rect x="710" y="75.5" width="4.5" height="1.3" fill="#e0e000"/><path d="M743,75 L750,64 L754,67.5 L746.5,78 L742.5,80 Z" fill="#ffff00" stroke="#000" stroke-width="1.1"/><path d="M749.5,64.5 L751.5,62 L754.5,63.5 V66.5 Z" fill="#ff0000"/><path d="M742.5,80 L743,76.5 L745.5,78.5 Z" fill="#000"/><path d="M742,81.5 H763" stroke="#0000ff" stroke-width="1"/><path d="M781.5,62 V72 M770.5,72.5 H792.5 L781.5,83.5 Z" fill="none" stroke="#000" stroke-width="1.6"/><rect x="801.5" y="64.5" width="21" height="13" rx="2" fill="#fff" stroke="#000" stroke-width="1.5"/><path d="M812,77.5 V84" stroke="#000" stroke-width="1.3"/><text x="812" y="75.5" text-anchor="middle" font-family="Liberation Mono" font-weight="bold" font-size="12" fill="#000">A</text><polyline points="843.5,62 843.5,65 851.5,69 836,76.5 843,80 843,84" fill="none" stroke="#000" stroke-width="1.1"/><path d="M874,62 V71 M874,76 V84" stroke="#000" stroke-width="1.1"/><path d="M866,71 H882 M866,76 H882" stroke="#000" stroke-width="2"/><path d="M902,62 Q902,66 904,66 Q910,66.5 909,71 Q908,73 904,73 Q910,73.5 909,78 Q908,80.5 903.5,80.5 V84" fill="none" stroke="#000" stroke-width="1.3"/><path d="M937.5,62 V84 M926,67 H949 L937.5,78 Z M926,78.5 H949" fill="none" stroke="#000" stroke-width="1.2"/><path d="M961,65.5 H968 Q974.5,69 974.5,73 Q974.5,77 968,80.5 H961 Z" fill="#f0f0f0" stroke="#000" stroke-width="1.3"/><path d="M956,68.3 H961 M956,77.5 H961" stroke="#000" stroke-width="1.1"/><path d="M974.5,73 H980" stroke="#000" stroke-width="2"/><path d="M993,84 V81 L988,76 L987.5,73.5 L990,72.5 L993,74.5 L991,66 L992,62.5 L994,63 L997,69 L996.5,64 L999,62.5 L1001,64 L1002.5,70 L1004,65 L1006,65.5 L1005.5,71 L1007.5,68.5 L1010,70 L1009,76 L1005,81 V84 Z" fill="#fff" stroke="#000" stroke-width="1.3"/><path d="M1024.5,82.5 V79 L1020,74 L1021,71.5 L1023,71 V67 L1025,65.5 L1027,66 L1028,64.5 L1030,64.5 L1031,66 L1033,65.5 L1035,67 L1038.5,68.5 V75 L1035.5,79 V82.5 Z" fill="#fff" stroke="#000" stroke-width="1.3"/><path d="M1027,66.5 V71 M1030.5,65.5 V70.5" stroke="#000" stroke-width="1"/><path d="M1054,71 Q1057,65.5 1062,65.5 Q1069,66 1069.5,73 Q1069,81 1060.5,81.5 L1058,81" fill="none" stroke="#000" stroke-width="1.3"/><path d="M1051,70 V74.5 H1055.5" fill="none" stroke="#000" stroke-width="1.6"/><path d="M1051.5,74 L1054.5,71" stroke="#000" stroke-width="1.3"/><path d="M1098,71 Q1095,65.5 1090,65.5 Q1083,66 1082.5,73 Q1083,81 1091.5,81.5 L1094,81" fill="none" stroke="#a8a8a8" stroke-width="1.3"/><path d="M1101,70 V74.5 H1096.5" fill="none" stroke="#a8a8a8" stroke-width="1.6"/><path d="M1111,71 H1119 V73 H1113.5 V76.5 H1117.5 V78.5 H1113.5 V82 H1119 V84 H1111 Z" fill="#a0a0a0"/><path d="M1121,73 H1135 V81 H1133 V75.5 H1129 V79 H1127 V75.5 H1123 V81 H1121 Z" fill="#a0a0a0"/><path d="M1114,67.5 L1118.5,62.5 H1127.5 L1131.5,67 M1128,67.5 H1132 V63.5" fill="none" stroke="#a0a0a0" stroke-width="1"/><path d="M1142,71 H1150 V73 H1144.5 V76.5 H1148.5 V78.5 H1144.5 V82 H1150 V84 H1142 Z" fill="#a0a0a0"/><path d="M1166,71 H1158 V73 H1163.5 V76.5 H1159.5 V78.5 H1163.5 V82 H1158 V84 H1166 Z" fill="#a0a0a0"/><path d="M1145,67.5 L1149.5,62.5 H1158.5 L1162.5,67 M1159,67.5 H1163 V63.5" fill="none" stroke="#a0a0a0" stroke-width="1"/><text x="1172" y="81" font-family="Liberation Serif" font-style="italic" font-weight="bold" font-size="21" fill="#000">A</text><text x="1185" y="81" font-family="Liberation Serif" font-style="italic" font-size="15" fill="#000">a</text><text x="1204" y="78" font-family="Liberation Sans" font-size="18" fill="#000" letter-spacing="-1">.op</text></svg>
<svg class="a" style="left:0;top:0" width="1920" height="1080"><path d="M174.5,806 L174.5,674 L388.5,674" fill="none" stroke="#0000ff" stroke-width="1.3"/><path d="M443.5,674 L633.5,674 L633.5,806" fill="none" stroke="#0000ff" stroke-width="1.3"/><path d="M174.5,824 L174.5,878.5 L633.5,878.5 L633.5,824" fill="none" stroke="#0000ff" stroke-width="1.3"/><path d="M402,878.5 L402,886" fill="none" stroke="#0000ff" stroke-width="1.3"/><path d="M397.5,886.5 H406.5 L402,891.5 Z" fill="none" stroke="#000080" stroke-width="1.0"/><path d="M388.5,674 H395 Q397,670 401,671 Q404,668 407,671 Q410,668 413,673 H415.5" fill="none" stroke="#000080" stroke-width="1.0"/><path d="M415.5,674 H419 Q421,670 425,671 Q428,668 431,671 Q434,668 437,673 H443.5" fill="none" stroke="#000080" stroke-width="1.0"/><path d="M398,676 Q397,672 401,673 M402,676 Q401,672 405,673 M406,676 Q405,672 409,673" fill="none" stroke="#000080" stroke-width="0.8"/><path d="M422,676 Q421,672 425,673 M426,676 Q425,672 429,673 M430,676 Q429,672 433,673" fill="none" stroke="#000080" stroke-width="0.8"/><path d="M415.5,674 L415.5,681.5 L412.5,681.5 L412.5,747" fill="none" stroke="#0000ff" stroke-width="1.3"/><path d="M388.5,674 L388.5,695 L401,695" fill="none" stroke="#0000ff" stroke-width="1.3"/><path d="M443.5,674 L443.5,695 L423,695" fill="none" stroke="#0000ff" stroke-width="1.3"/><path d="M402,692 V698 L408,695 Z M408.5,692 V698" fill="none" stroke="#000080" stroke-width="1.0"/><path d="M422,692 V698 L416,695 Z M415.5,692 V698" fill="none" stroke="#000080" stroke-width="1.0"/><path d="M408.5,695 L415.5,695" fill="none" stroke="#0000ff" stroke-width="1.3"/><circle cx="388.5" cy="674" r="1.8" fill="#0000ff"/><circle cx="415.5" cy="674" r="1.8" fill="#0000ff"/><circle cx="443.5" cy="674" r="1.8" fill="#0000ff"/><circle cx="412.5" cy="695" r="1.8" fill="#0000ff"/><path d="M408.3,655 V626.3 H410 L413,622.5 L417,628 L421,622.5 L424.5,628 L426.5,626.3 V655" fill="none" stroke="#000080" stroke-width="1.0"/><path d="M408.3,655 Q409,659 412.5,658.5 Q416,659 417,654 M412.5,658.5 Q419,659 421,654 M417,658.5 Q424,659 426.5,655" fill="none" stroke="#000080" stroke-width="1.0"/><path d="M413,649 V656 M416.5,649 V656 M420,649 V656" stroke="#000080" stroke-width="0.9"/><text x="412" y="622" font-family="Liberation Sans" font-weight="bold" font-size="5.5" fill="#26263a" letter-spacing="0.1">R14</text><text x="412" y="635" font-family="Liberation Sans" font-weight="bold" font-size="5.5" fill="#26263a" letter-spacing="0.1">10R</text><text x="410.5" y="645" font-family="Liberation Sans" font-weight="bold" font-size="5.5" fill="#26263a" letter-spacing="0.1">100μ</text><text x="414" y="651" font-family="Liberation Sans" font-weight="bold" font-size="5.5" fill="#26263a" letter-spacing="0.1">L5</text><text x="427" y="664" font-family="Liberation Sans" font-weight="bold" font-size="5.5" fill="#26263a" letter-spacing="0.1">K1 L5 L6 L7 1</text><text x="391" y="684" font-family="Liberation Sans" font-weight="bold" font-size="5.5" fill="#26263a" letter-spacing="0.1">L6</text><text x="400" y="684" font-family="Liberation Sans" font-weight="bold" font-size="5.5" fill="#26263a" letter-spacing="0.1">4μ</text><text x="417" y="684" font-family="Liberation Sans" font-weight="bold" font-size="5.5" fill="#26263a" letter-spacing="0.1">L7</text><text x="424" y="684" font-family="Liberation Sans" font-weight="bold" font-size="5.5" fill="#26263a" letter-spacing="0.1">4μ</text><text x="401" y="691" font-family="Liberation Sans" font-weight="bold" font-size="5.5" fill="#26263a" letter-spacing="0.1">D3</text><text x="404" y="704" font-family="Liberation Sans" font-weight="bold" font-size="5.5" fill="#26263a" letter-spacing="0.1">D</text><text x="415" y="691" font-family="Liberation Sans" font-weight="bold" font-size="5.5" fill="#26263a" letter-spacing="0.1">D4</text><text x="418" y="704" font-family="Liberation Sans" font-weight="bold" font-size="5.5" fill="#26263a" letter-spacing="0.1">D</text><path d="M239.5,785.5 L239.5,747 L564.5,747 L564.5,786" fill="none" stroke="#0000ff" stroke-width="1.3"/><path d="M322.5,747 L322.5,805" fill="none" stroke="#0000ff" stroke-width="1.3"/><circle cx="412.5" cy="755.5" r="5.5" fill="none" stroke="#000080" stroke-width="1.1"/><path d="M410,752.5 H415 M412.5,750 V755" fill="none" stroke="#000080" stroke-width="0.9"/><path d="M412.5,761 V764 M409,764 H416" fill="none" stroke="#000080" stroke-width="1.2"/><path d="M408.5,766.5 H416.5 L412.5,770.5 Z" fill="none" stroke="#000080" stroke-width="1.0"/><text x="418" y="749" font-family="Liberation Sans" font-weight="bold" font-size="5.5" fill="#26263a" letter-spacing="0.1">V2</text><text x="418" y="766" font-family="Liberation Sans" font-weight="bold" font-size="5.5" fill="#26263a" letter-spacing="0.1">12</text><circle cx="412.5" cy="747" r="1.8" fill="#0000ff"/><circle cx="322.5" cy="747" r="1.8" fill="#0000ff"/><circle cx="502.5" cy="747" r="1.8" fill="#0000ff"/><path d="M502.5,747 L502.5,760.5" fill="none" stroke="#0000ff" stroke-width="1.3"/><path d="M498,760.5 H507" fill="none" stroke="#000080" stroke-width="1.8"/><path d="M498,762.8 Q502.5,761.5 507,762.8" fill="none" stroke="#000080" stroke-width="1.2"/><path d="M502.5,763 L502.5,778" fill="none" stroke="#0000ff" stroke-width="1.3"/><path d="M498,778.5 H507 L502.5,782.5 Z" fill="none" stroke="#000080" stroke-width="1.0"/><text x="503" y="757" font-family="Liberation Sans" font-weight="bold" font-size="5.5" fill="#26263a" letter-spacing="0.1">C6</text><text x="502" y="768" font-family="Liberation Sans" font-weight="bold" font-size="5.5" fill="#26263a" letter-spacing="0.1">4700μF</text><path d="M322.5,788.4 L478.3,788.4" fill="none" stroke="#0000ff" stroke-width="1.3"/><circle cx="322.5" cy="788.4" r="1.8" fill="#0000ff"/><circle cx="360.5" cy="788.4" r="1.8" fill="#0000ff"/><circle cx="433.5" cy="788.4" r="1.8" fill="#0000ff"/><circle cx="478.3" cy="788.4" r="1.8" fill="#0000ff"/><path d="M322.5,805.0 L326.5,806.2 L318.5,808.8 L326.5,811.2 L318.5,813.8 L326.5,816.2 L318.5,818.8 L322.5,820.0" fill="none" stroke="#000080" stroke-width="1.0"/><path d="M322.5,820 L322.5,837" fill="none" stroke="#0000ff" stroke-width="1.3"/><path d="M360.5,788.4 L360.5,805" fill="none" stroke="#0000ff" stroke-width="1.3"/><path d="M360.5,805.0 L364.5,806.2 L356.5,808.8 L364.5,811.2 L356.5,813.8 L364.5,816.2 L356.5,818.8 L360.5,820.0" fill="none" stroke="#000080" stroke-width="1.0"/><path d="M360.5,820 L360.5,823.6" fill="none" stroke="#0000ff" stroke-width="1.3"/><path d="M433.5,788.4 L433.5,805" fill="none" stroke="#0000ff" stroke-width="1.3"/><path d="M433.5,805.0 L437.5,806.2 L429.5,808.8 L437.5,811.2 L429.5,813.8 L437.5,816.2 L429.5,818.8 L433.5,820.0" fill="none" stroke="#000080" stroke-width="1.0"/><path d="M433.5,820 L433.5,823.3" fill="none" stroke="#0000ff" stroke-width="1.3"/><path d="M478.3,788.4 L478.3,805" fill="none" stroke="#0000ff" stroke-width="1.3"/><path d="M478.3,805.0 L482.3,806.2 L474.3,808.8 L482.3,811.2 L474.3,813.8 L482.3,816.2 L474.3,818.8 L478.3,820.0" fill="none" stroke="#000080" stroke-width="1.0"/><path d="M478.3,820 L478.3,837" fill="none" stroke="#0000ff" stroke-width="1.3"/><text x="327" y="810" font-family="Liberation Sans" font-weight="bold" font-size="5.5" fill="#26263a" letter-spacing="0.1">R6</text><text x="326" y="818" font-family="Liberation Sans" font-weight="bold" font-size="5.5" fill="#26263a" letter-spacing="0.1">470R</text><text x="362" y="813" font-family="Liberation Sans" font-weight="bold" font-size="5.5" fill="#26263a" letter-spacing="0.1">R8</text><text x="362" y="821" font-family="Liberation Sans" font-weight="bold" font-size="5.5" fill="#26263a" letter-spacing="0.1">47000R</text><text x="437" y="813" font-family="Liberation Sans" font-weight="bold" font-size="5.5" fill="#26263a" letter-spacing="0.1">R9</text><text x="437" y="821" font-family="Liberation Sans" font-weight="bold" font-size="5.5" fill="#26263a" letter-spacing="0.1">47000R</text><text x="481" y="813" font-family="Liberation Sans" font-weight="bold" font-size="5.5" fill="#26263a" letter-spacing="0.1">R7</text><text x="481" y="821" font-family="Liberation Sans" font-weight="bold" font-size="5.5" fill="#26263a" letter-spacing="0.1">470R</text><path d="M182.5,823.5 L239.5,823.5" fill="none" stroke="#0000ff" stroke-width="1.3"/><path d="M253.6,823.5 L341,823.5" fill="none" stroke="#0000ff" stroke-width="1.3"/><path d="M345,823.5 L397.8,823.5 L397.8,847.5 L467,847.5" fill="none" stroke="#0000ff" stroke-width="1.3"/><path d="M333,847.5 L384.4,847.5 L384.4,840 L402.2,840 L402.2,823.3 L456,823.3" fill="none" stroke="#0000ff" stroke-width="1.3"/><path d="M461,823.3 L550.6,823.3" fill="none" stroke="#0000ff" stroke-width="1.3"/><path d="M341.5,819.5 V827.5 M344.5,819.5 V827.5" fill="none" stroke="#000080" stroke-width="1.2"/><path d="M456.5,819.5 V827.5 M459.5,819.5 V827.5" fill="none" stroke="#000080" stroke-width="1.2"/><text x="341" y="818" font-family="Liberation Sans" font-weight="bold" font-size="5.5" fill="#26263a" letter-spacing="0.1">C4</text><text x="340" y="831" font-family="Liberation Sans" font-weight="bold" font-size="5.5" fill="#26263a" letter-spacing="0.1">1μF</text><text x="458" y="817" font-family="Liberation Sans" font-weight="bold" font-size="5.5" fill="#26263a" letter-spacing="0.1">C5</text><text x="456" y="830" font-family="Liberation Sans" font-weight="bold" font-size="5.5" fill="#26263a" letter-spacing="0.1">1μF</text><circle cx="191.5" cy="823.5" r="1.8" fill="#0000ff"/><circle cx="198.5" cy="823.5" r="1.8" fill="#0000ff"/><circle cx="225.3" cy="823.5" r="1.8" fill="#0000ff"/><circle cx="239.5" cy="823.5" r="1.8" fill="#0000ff"/><circle cx="253.6" cy="823.5" r="1.8" fill="#0000ff"/><circle cx="322.5" cy="823.6" r="1.8" fill="#0000ff"/><circle cx="360.5" cy="823.6" r="1.8" fill="#0000ff"/><circle cx="433.5" cy="823.3" r="1.8" fill="#0000ff"/><circle cx="453.6" cy="823.3" r="1.8" fill="#0000ff"/><circle cx="478.3" cy="823.3" r="1.8" fill="#0000ff"/><circle cx="550.6" cy="823.3" r="1.8" fill="#0000ff"/><path d="M203.0,823.5 L204.2,820.0 L206.5,827.0 L208.8,820.0 L211.2,827.0 L213.5,820.0 L215.8,827.0 L217.0,823.5" fill="none" stroke="#000080" stroke-width="1.0"/><path d="M198.5,823.5 L198.5,805 L205,805" fill="none" stroke="#0000ff" stroke-width="1.3"/><path d="M211,805 L225.3,805 L225.3,823.5" fill="none" stroke="#0000ff" stroke-width="1.3"/><path d="M205,802 V808 L210.5,805 Z M211,802 V808" fill="none" stroke="#000080" stroke-width="1.0"/><text x="203" y="801" font-family="Liberation Sans" font-weight="bold" font-size="5.5" fill="#26263a" letter-spacing="0.1">D5</text><text x="206" y="814" font-family="Liberation Sans" font-weight="bold" font-size="5.5" fill="#26263a" letter-spacing="0.1">D</text><text x="205" y="818" font-family="Liberation Sans" font-weight="bold" font-size="5.5" fill="#26263a" letter-spacing="0.1">R10</text><text x="205" y="831" font-family="Liberation Sans" font-weight="bold" font-size="5.5" fill="#26263a" letter-spacing="0.1">10R</text><path d="M191.5,823.5 L191.5,842" fill="none" stroke="#0000ff" stroke-width="1.3"/><path d="M191.5,842.0 L195.5,843.2 L187.5,845.5 L195.5,847.8 L187.5,850.2 L195.5,852.5 L187.5,854.8 L191.5,856.0" fill="none" stroke="#000080" stroke-width="1.0"/><path d="M191.5,856 L191.5,878.5" fill="none" stroke="#0000ff" stroke-width="1.3"/><text x="195" y="847" font-family="Liberation Sans" font-weight="bold" font-size="5.5" fill="#26263a" letter-spacing="0.1">R12</text><text x="195" y="855" font-family="Liberation Sans" font-weight="bold" font-size="5.5" fill="#26263a" letter-spacing="0.1">1000R</text><circle cx="191.5" cy="878.5" r="1.8" fill="#0000ff"/><circle cx="239.5" cy="878.5" r="1.8" fill="#0000ff"/><path d="M174.5,806 H180.5 M174.5,815 H180.5 M174.5,824 H180.5 M180.5,804.5 V808 M180.5,812.5 V817.5 M180.5,821.5 V825.5" fill="none" stroke="#000080" stroke-width="1.0"/><path d="M182.5,809 V823.5" fill="none" stroke="#000080" stroke-width="1.2"/><path d="M176,813 L178,815 L176,817" fill="none" stroke="#000080" stroke-width="0.9"/><text x="165" y="814" font-family="Liberation Sans" font-weight="bold" font-size="5.5" fill="#26263a" letter-spacing="0.1">M4</text><text x="149" y="823" font-family="Liberation Sans" font-weight="bold" font-size="5.5" fill="#26263a" letter-spacing="0.1">IRF244N</text><path d="M239.5,805 L239.5,843" fill="none" stroke="#0000ff" stroke-width="1.3"/><path d="M239.5,864 L239.5,878.5" fill="none" stroke="#0000ff" stroke-width="1.3"/><path d="M250.5,788 V802.5" fill="none" stroke="#000080" stroke-width="1.3"/><path d="M239.5,785.5 L250.5,791" fill="none" stroke="#000080" stroke-width="1.0"/><path d="M250.5,798.5 L239.5,805" fill="none" stroke="#000080" stroke-width="1.0"/><path d="M250.5,847 V862" fill="none" stroke="#000080" stroke-width="1.3"/><path d="M239.5,843 L250.5,850" fill="none" stroke="#000080" stroke-width="1.0"/><path d="M250.5,858 L239.5,864" fill="none" stroke="#000080" stroke-width="1.0"/><path d="M250.5,795 L253.6,795 L253.6,854.5 L250.5,854.5" fill="none" stroke="#0000ff" stroke-width="1.3"/><text x="234" y="795" font-family="Liberation Sans" font-weight="bold" font-size="5.5" fill="#26263a" letter-spacing="0.1">Q6</text><text x="218" y="801" font-family="Liberation Sans" font-weight="bold" font-size="5.5" fill="#26263a" letter-spacing="0.1">BC337-25</text><text x="212" y="850" font-family="Liberation Sans" font-weight="bold" font-size="5.5" fill="#26263a" letter-spacing="0.1">BC327-25</text><text x="228" y="859" font-family="Liberation Sans" font-weight="bold" font-size="5.5" fill="#26263a" letter-spacing="0.1">Q8</text><path d="M333,839 V856" fill="none" stroke="#000080" stroke-width="1.3"/><path d="M322.5,837 L333,842" fill="none" stroke="#000080" stroke-width="1.0"/><path d="M333,852 L322.5,858" fill="none" stroke="#000080" stroke-width="1.0"/><path d="M322.5,858 L322.5,878.5" fill="none" stroke="#0000ff" stroke-width="1.3"/><circle cx="322.5" cy="878.5" r="1.8" fill="#0000ff"/><text x="316" y="847" font-family="Liberation Sans" font-weight="bold" font-size="5.5" fill="#26263a" letter-spacing="0.1">Q4</text><text x="301" y="854" font-family="Liberation Sans" font-weight="bold" font-size="5.5" fill="#26263a" letter-spacing="0.1">BC337-25</text><path d="M467,839 V856" fill="none" stroke="#000080" stroke-width="1.3"/><path d="M478.3,837 L467,842" fill="none" stroke="#000080" stroke-width="1.0"/><path d="M467,852 L478.3,858" fill="none" stroke="#000080" stroke-width="1.0"/><path d="M478.3,858 L478.3,878.5" fill="none" stroke="#0000ff" stroke-width="1.3"/><circle cx="478.3" cy="878.5" r="1.8" fill="#0000ff"/><text x="476" y="846" font-family="Liberation Sans" font-weight="bold" font-size="5.5" fill="#26263a" letter-spacing="0.1">Q3</text><text x="476" y="853" font-family="Liberation Sans" font-weight="bold" font-size="5.5" fill="#26263a" letter-spacing="0.1">BC337-25</text><path d="M553.5,788 V803" fill="none" stroke="#000080" stroke-width="1.3"/><path d="M564.5,786 L553.5,791" fill="none" stroke="#000080" stroke-width="1.0"/><path d="M553.5,799 L564.5,806" fill="none" stroke="#000080" stroke-width="1.0"/><path d="M564.5,806 L564.5,834" fill="none" stroke="#0000ff" stroke-width="1.3"/><path d="M553.5,835.5 V850" fill="none" stroke="#000080" stroke-width="1.3"/><path d="M564.5,834 L553.5,838.5" fill="none" stroke="#000080" stroke-width="1.0"/><path d="M553.5,846 L564.5,853.5" fill="none" stroke="#000080" stroke-width="1.0"/><path d="M564.5,854 L564.5,878.5" fill="none" stroke="#0000ff" stroke-width="1.3"/><circle cx="564.5" cy="878.5" r="1.8" fill="#0000ff"/><path d="M553.5,795 L550.6,795 L550.6,854 L553.5,854" fill="none" stroke="#0000ff" stroke-width="1.3"/><text x="562" y="793" font-family="Liberation Sans" font-weight="bold" font-size="5.5" fill="#26263a" letter-spacing="0.1">Q5</text><text x="562" y="800" font-family="Liberation Sans" font-weight="bold" font-size="5.5" fill="#26263a" letter-spacing="0.1">BC337-25</text><text x="568" y="841" font-family="Liberation Sans" font-weight="bold" font-size="5.5" fill="#26263a" letter-spacing="0.1">BC327-25</text><text x="567" y="849" font-family="Liberation Sans" font-weight="bold" font-size="5.5" fill="#26263a" letter-spacing="0.1">Q7</text><path d="M564.5,819.3 L587,819.3" fill="none" stroke="#0000ff" stroke-width="1.3"/><path d="M587.0,819.3 L588.1,815.8 L590.2,822.8 L592.4,815.8 L594.6,822.8 L596.8,815.8 L598.9,822.8 L600.0,819.3" fill="none" stroke="#000080" stroke-width="1.0"/><path d="M600,819.3 L625,819.3" fill="none" stroke="#0000ff" stroke-width="1.3"/><path d="M581.5,819.3 L581.5,795 L590,795" fill="none" stroke="#0000ff" stroke-width="1.3"/><path d="M595.5,795 L605.5,795 L605.5,819.3" fill="none" stroke="#0000ff" stroke-width="1.3"/><path d="M590,792 V798 L595.5,795 Z M595.5,792 V798" fill="none" stroke="#000080" stroke-width="1.0"/><circle cx="564.5" cy="819.3" r="1.8" fill="#0000ff"/><circle cx="581.5" cy="819.3" r="1.8" fill="#0000ff"/><circle cx="605.5" cy="819.3" r="1.8" fill="#0000ff"/><circle cx="612.5" cy="819.3" r="1.8" fill="#0000ff"/><text x="587" y="791" font-family="Liberation Sans" font-weight="bold" font-size="5.5" fill="#26263a" letter-spacing="0.1">D6</text><text x="590" y="803" font-family="Liberation Sans" font-weight="bold" font-size="5.5" fill="#26263a" letter-spacing="0.1">D</text><text x="588" y="815" font-family="Liberation Sans" font-weight="bold" font-size="5.5" fill="#26263a" letter-spacing="0.1">R11</text><text x="589" y="827" font-family="Liberation Sans" font-weight="bold" font-size="5.5" fill="#26263a" letter-spacing="0.1">10R</text><path d="M612.5,819.3 L612.5,842" fill="none" stroke="#0000ff" stroke-width="1.3"/><path d="M612.5,842.0 L616.5,843.2 L608.5,845.5 L616.5,847.8 L608.5,850.2 L616.5,852.5 L608.5,854.8 L612.5,856.0" fill="none" stroke="#000080" stroke-width="1.0"/><path d="M612.5,856 L612.5,878.5" fill="none" stroke="#0000ff" stroke-width="1.3"/><circle cx="612.5" cy="878.5" r="1.8" fill="#0000ff"/><text x="617" y="847" font-family="Liberation Sans" font-weight="bold" font-size="5.5" fill="#26263a" letter-spacing="0.1">R13</text><text x="617" y="855" font-family="Liberation Sans" font-weight="bold" font-size="5.5" fill="#26263a" letter-spacing="0.1">1000R</text><path d="M633.5,806 H627.5 M633.5,815 H627.5 M633.5,824 H627.5 M627.5,804.5 V808 M627.5,812.5 V817.5 M627.5,821.5 V825.5" fill="none" stroke="#000080" stroke-width="1.0"/><path d="M625,809 V823.5" fill="none" stroke="#000080" stroke-width="1.2"/><path d="M632,813 L630,815 L632,817" fill="none" stroke="#000080" stroke-width="0.9"/><text x="635" y="810" font-family="Liberation Sans" font-weight="bold" font-size="5.5" fill="#26263a" letter-spacing="0.1">M3</text><text x="635" y="818" font-family="Liberation Sans" font-weight="bold" font-size="5.5" fill="#26263a" letter-spacing="0.1">IRF244N</text></svg>
<svg class="a" style="left:0;top:0" width="200" height="600"><rect x="12" y="98" width="14" height="13" fill="#c0c0c0"/><path d="M12,98 V114 M10,111.5 H26" stroke="#000" stroke-width="1.5"/><path d="M10,100 H12 M10,103 H12 M10,106 H12 M10,109 H12 M15,111 V114 M18,111 V114 M21,111 V114 M24,111 V114" stroke="#000" stroke-width="1"/><polyline points="12.5,106 15.5,102.5 18,102.5 20,104.5 22,104.5 25.5,101.5" fill="none" stroke="#ff0000" stroke-width="1.4"/><rect x="84" y="99" width="2.2" height="8.5" fill="#0000ff"/><path d="M80.5,103.5 H84 M86,100.5 L91,95.5 M86,106 L91.5,111.5" stroke="#0000ff" stroke-width="1"/><path d="M88,109.5 L91,108 L89.5,111 Z" fill="#0000ff" stroke="#0000ff" stroke-width="0.8"/><rect x="15" y="135" width="18" height="19" fill="#c4c4c4"/><path d="M14,135 V155" stroke="#000" stroke-width="1.5"/><path d="M13,137.5 H14 M13,140.5 H14 M13,143.5 H14 M17,154 V155 M20,154 V155 M23,154 V155 M26,154 V155 M32,154 V155" stroke="#000" stroke-width="1.2"/><path d="M16,138.5 L16.5,138 M19,136 L23,140 L26,137 L28,138.5 L31,140.5" fill="none" stroke="#0000ff" stroke-width="1" stroke-dasharray="2,1"/><path d="M16,144.5 H19 M21,145 H23 L25,146 H27 M30,146 L32,143.5" stroke="#ff0000" stroke-width="1.3"/><path d="M21,151 L22,149.5 M27,149 V151.5 H33" fill="none" stroke="#000080" stroke-width="1.4"/><rect x="19" y="576" width="3" height="11" fill="#0000ff"/><path d="M15,581.5 H19 M22,577.5 L27.5,572.5 M22,584 L28.5,591.5" stroke="#0000ff" stroke-width="1.1"/><path d="M23.5,588 L27,586.5 L27.5,590.5 Z" fill="#0000ff" stroke="#0000ff" stroke-width="1"/></svg>
<div class="a" style="left:0px;top:1020px;width:1920px;height:1px;background:#c4bcbc;"></div>
<div class="a" style="left:0px;top:1021px;width:1920px;height:59px;background:linear-gradient(90deg,#e4dde2 0%,#e9dcd9 5%,#eddcd3 19%,#e9dbd9 27%,#e6dade 45%,#e7dadd 62%,#eadbd9 75%,#ecdbd6 100%);"></div>
<svg class="a" style="left:20px;top:1028px" width="44" height="44" viewBox="0 0 44 44"><defs><linearGradient id="sun" x1="0" y1="0" x2="1" y2="1"><stop offset="0" stop-color="#f7b52c"/><stop offset="1" stop-color="#f06a10"/></linearGradient><linearGradient id="cl" x1="0" y1="0" x2="0" y2="1"><stop offset="0" stop-color="#d8e6f8"/><stop offset="1" stop-color="#a9c4ea"/></linearGradient></defs><circle cx="19.5" cy="24" r="12" fill="url(#sun)"/><path d="M5,22 Q5,17 10,17.5 Q12,13 17,15 Q21,15 21,19 Q24,19.5 23.5,22 Z" fill="url(#cl)"/><path d="M17,35 Q17,30 22,30.5 Q24,26 29,28 Q33,28 33,32 Q36,32.5 35.5,35 Z" fill="url(#cl)"/><circle cx="29" cy="9" r="9" fill="#c42b1c"/><text x="29" y="13.5" text-anchor="middle" font-family="Liberation Sans" font-size="12" font-weight="bold" fill="#fff">1</text></svg><div class="t" style="left:64px;top:1033px;font-size:14px;color:#1e1e1e;">17°C</div><div class="t" style="left:64px;top:1052px;font-size:15px;color:#4a4a4a;">Parzial. sereno</div><svg class="a" style="left:557px;top:1036px" width="30" height="30" viewBox="0 0 30 30"><defs><linearGradient id="win" x1="0" y1="0" x2="1" y2="1"><stop offset="0" stop-color="#52c8fb"/><stop offset="1" stop-color="#0a6ed6"/></linearGradient></defs><rect x="0" y="0" width="14" height="14" rx="1.5" fill="url(#win)"/><rect x="15" y="0" width="14" height="14" rx="1" fill="url(#win)"/><rect x="0" y="15" width="14" height="14" rx="1" fill="url(#win)"/><rect x="15" y="15" width="14" height="14" rx="1" fill="url(#win)"/></svg><div class="a" style="left:604px;top:1031px;width:273px;height:38px;border-radius:19px;background:#f6f0f0;border:1px solid #e2d8d8;"></div><svg class="a" style="left:614px;top:1038px" width="26" height="26" viewBox="0 0 26 26"><circle cx="12" cy="10.5" r="7" fill="none" stroke="#1a1a1a" stroke-width="2"/><path d="M17,15.5 L22,20.5" stroke="#1a1a1a" stroke-width="2.2" stroke-linecap="round"/></svg><div class="t" style="left:650px;top:1044px;font-size:17px;color:#454545;">Search</div><svg class="a" style="left:844px;top:1037px" width="28" height="28" viewBox="0 0 28 28"><defs><linearGradient id="bg1" x1="0" y1="0" x2="1" y2="1"><stop offset="0" stop-color="#38bdf8"/><stop offset="1" stop-color="#1d4ed8"/></linearGradient></defs><path d="M14,1.5 A12,12 0 1 1 5,22 L3,26 L3,19 A12,12 0 0 1 14,1.5 Z" fill="#fff" stroke="url(#bg1)" stroke-width="2"/><path d="M10,6 V19 L16,22 L20,17 L14,13" fill="none" stroke="url(#bg1)" stroke-width="3" stroke-linejoin="round"/></svg><svg class="a" style="left:892px;top:1035px" width="32" height="32" viewBox="0 0 32 32"><defs><linearGradient id="tv1" x1="0" y1="0" x2="0" y2="1"><stop offset="0" stop-color="#444"/><stop offset="1" stop-color="#111"/></linearGradient></defs><rect x="1" y="9" width="23" height="21" rx="2" fill="url(#tv1)"/><rect x="9" y="1" width="22" height="20" rx="2" fill="#e8e8e8" fill-opacity="0.85"/><rect x="9" y="9" width="15" height="12" fill="#bdbdbd"/></svg><svg class="a" style="left:947px;top:1035px" width="32" height="32" viewBox="0 0 32 32"><defs><linearGradient id="ch" x1="0" y1="0" x2="1" y2="1"><stop offset="0" stop-color="#8b7ad8"/><stop offset="1" stop-color="#4f52b2"/></linearGradient></defs><path d="M16,1.5 A14,14 0 1 1 9,27.5 L1,30 L4,23 A14,14 0 0 1 16,1.5 Z" fill="url(#ch)"/><rect x="7" y="10" width="13" height="11" rx="2" fill="#fff"/><path d="M20,14 L25,11 V20 L20,17 Z" fill="#fff"/></svg><svg class="a" style="left:1002px;top:1035px" width="32" height="32" viewBox="0 0 32 32"><path d="M1,3 H11 L14,6 H31 V29 H1 Z" fill="#e3a20c"/><rect x="1" y="8" width="30" height="21" rx="1" fill="#fcc834"/><rect x="5" y="20" width="22" height="9" rx="2" fill="#1f7ad1"/><rect x="9" y="23" width="14" height="1.5" fill="#0d3d74"/></svg><svg class="a" style="left:1057px;top:1037px" width="32" height="26" viewBox="0 0 32 26"><rect x="0.5" y="2.5" width="30" height="21" fill="#f8f8f8" stroke="#6a6a6a" stroke-width="1"/><rect x="1" y="2" width="30" height="2" fill="#8a8a8a"/><rect x="9" y="6" width="12" height="16" rx="1.5" fill="#1a73d0"/><path d="M3,7 H7 M3,10 H7 M3,13 H7 M3,16 H7 M3,19 H7 M23,7 H28 M23,10 H28" stroke="#9a9a9a" stroke-width="1"/></svg><svg class="a" style="left:1113px;top:1035px" width="30" height="30" viewBox="0 0 30 30"><circle cx="15" cy="15" r="15" fill="#e53935"/><path d="M15,15 L28,7.5 A15,15 0 0 1 15,30 Z" fill="#fbc02d"/><path d="M15,15 L15,30 A15,15 0 0 1 2,7.5 Z" fill="#43a047"/><path d="M15,15 L2,7.5 A15,15 0 0 1 28,7.5 Z" fill="#e53935"/><circle cx="15" cy="15" r="7" fill="#fff"/><circle cx="15" cy="15" r="5.5" fill="#1e88e5"/></svg><svg class="a" style="left:1168px;top:1035px" width="30" height="30" viewBox="0 0 30 30"><defs><linearGradient id="ed" x1="0" y1="0" x2="1" y2="1"><stop offset="0" stop-color="#2bb4e8"/><stop offset="0.6" stop-color="#1f8fd8"/><stop offset="1" stop-color="#58d66a"/></linearGradient></defs><circle cx="15" cy="15" r="15" fill="url(#ed)"/><path d="M6,22 Q5,13 14,12 Q21,12 22,17 Q22,21 17,21 Q12,21 13,17 Q8,19 10,25 Q14,30 22,28 Q10,30 6,22 Z" fill="#0c5aa6"/><path d="M22,17 Q26,17 29,14 L30,18 Q27,23 20,22 Z" fill="#6ce07a"/></svg><svg class="a" style="left:1222px;top:1035px" width="31" height="31" viewBox="0 0 31 31"><path d="M9,6 V2 H22 V6" fill="none" stroke="#38c6f4" stroke-width="2"/><rect x="0.5" y="5" width="29" height="25" rx="3" fill="#1c5ea6"/><rect x="9" y="12" width="5.5" height="5.5" fill="#f25022"/><rect x="15.5" y="12" width="5.5" height="5.5" fill="#7fba00"/><rect x="9" y="18.5" width="5.5" height="5.5" fill="#00a4ef"/><rect x="15.5" y="18.5" width="5.5" height="5.5" fill="#ffb900"/></svg><div class="a" style="left:1269px;top:1026px;width:48px;height:48px;border-radius:5px;background:#f5eeec;border:1px solid #e9dfdc;"></div><svg class="a" style="left:1274px;top:1029px" width="45" height="42" viewBox="0 0 30 28"><path d="M2.6,4 V23.5 L17.5,13.5 M2.6,4 L7,7.5" fill="none" stroke="#000" stroke-width="1"/><path d="M4,14 L8,9 Q10,5 11.5,4 Q9.5,8 10,10.5 Q11,13 13,14 Z" fill="#8a0000"/><path d="M12.5,4 H21.5 L16.5,12.5 Q15.5,14 14,13.8 L15.8,7.5 Q15,6 12.5,5.5 Z" fill="#8a0000"/><path d="M21.5,4 L16.2,13.5" fill="none" stroke="#000" stroke-width="0.7"/></svg><div class="a" style="left:1283px;top:1070px;width:20px;height:3px;border-radius:2px;background:#0f6cd0;"></div><svg class="a" style="left:1333px;top:1035px" width="30" height="30" viewBox="0 0 30 30"><circle cx="15" cy="15" r="15" fill="#e53935"/><path d="M15,15 L28,7.5 A15,15 0 0 1 15,30 Z" fill="#fbc02d"/><path d="M15,15 L15,30 A15,15 0 0 1 2,7.5 Z" fill="#43a047"/><path d="M15,15 L2,7.5 A15,15 0 0 1 28,7.5 Z" fill="#e53935"/><circle cx="15" cy="15" r="7" fill="#fff"/><circle cx="15" cy="15" r="5.5" fill="#1e88e5"/></svg><svg class="a" style="left:1348px;top:1028px" width="22" height="22"><circle cx="11" cy="11" r="10" fill="#7b2fb8"/><text x="11" y="15.5" text-anchor="middle" font-family="Liberation Sans" font-size="12" fill="#e8d8f4">L</text></svg><div class="a" style="left:1344px;top:1071px;width:8px;height:3px;border-radius:2px;background:#857d7c;"></div><svg class="a" style="left:1600px;top:1030px" width="180" height="36" viewBox="0 0 180 36"><path d="M11.5,23 L18,16.5 L24.5,23" fill="none" stroke="#1a1a1a" stroke-width="1.4"/><path d="M50,25.5 Q48,25.5 48,22 Q48,18 52.5,18 Q54,12.5 59.5,13 Q64,13 65.5,17.5 Q68,18 68,21.5 Q68,25.5 65,25.5 Z" fill="#9a9a9a" stroke="#1a1a1a" stroke-width="1.3"/><path d="M49.5,24.5 L58,19 L66.5,24.5 Z" fill="#e4e4e4"/><path d="M88.5,17 Q98,8 107.5,17 M91.5,20.5 Q98,14 104.5,20.5 M94.5,24 Q98,20.5 101.5,24" fill="none" stroke="#1a1a1a" stroke-width="1.4"/><circle cx="98" cy="27" r="1.5" fill="#1a1a1a"/><path d="M118.5,18 H122 L127.5,12.5 V29.5 L122,24 H118.5 Z" fill="none" stroke="#1a1a1a" stroke-width="1.3"/><path d="M130.5,17.5 Q132.5,21 130.5,24.5 M133.5,15 Q137,21 133.5,27 M136.5,12.5 Q141.5,21 136.5,29.5" fill="none" stroke="#1a1a1a" stroke-width="1.3"/><rect x="149.5" y="15.5" width="16" height="11" rx="2" fill="none" stroke="#1a1a1a" stroke-width="1.3"/><rect x="152" y="18" width="11" height="6" fill="#1a1a1a"/><rect x="166" y="19" width="2" height="4" fill="#1a1a1a"/><path d="M153,11 L150,17 H153 L151,22" fill="none" stroke="#1a1a1a" stroke-width="1.2"/></svg><div class="t" style="left:1766px;top:1032px;width:100px;text-align:right;font-size:15px;color:#1a1a1a;">13:09</div><div class="t" style="left:1766px;top:1052px;width:100px;text-align:right;font-size:15.5px;color:#1a1a1a;">01/01/2024</div><svg class="a" style="left:1875px;top:1039px" width="20" height="22" viewBox="0 0 20 22"><path d="M3,16 V9.5 Q3,3 10,3 Q17,3 17,9.5 V16 L18.5,18 H1.5 Z" fill="none" stroke="#1a1a1a" stroke-width="1.3" stroke-linejoin="round"/><path d="M8,19.5 Q10,22 12,19.5" fill="none" stroke="#1a1a1a" stroke-width="1.2"/></svg></body></html>
